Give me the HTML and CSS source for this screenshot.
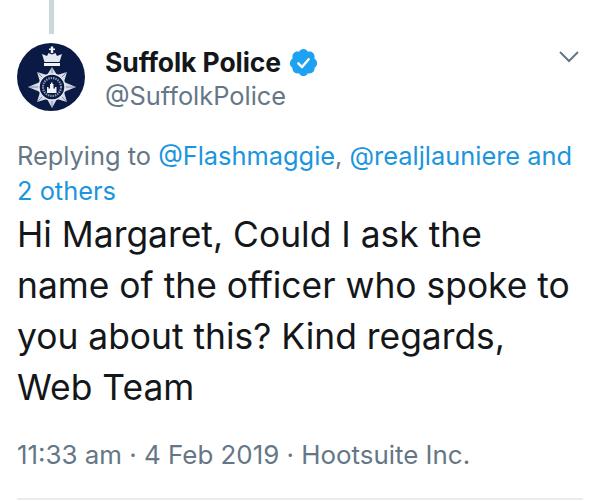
FILE: index.html
```html
<!DOCTYPE html>
<html lang="en">
<head>
<meta charset="utf-8">
<title>Suffolk Police tweet</title>
<link rel="stylesheet" href="styles.css">
</head>
<body>
<main class="tweet">
  <div class="thread-line"></div>
  <header class="head">
    <svg class="avatar" viewBox="0 0 68 68" aria-label="Suffolk Police crest">
      <circle cx="34" cy="34" r="34" fill="#0a1a45"/>
      <path d="M59 44 47 49 50 59 40 56 35 65 30 56 20 59 23 49 11 44 23 39 20 29 30 32 35 24 40 32 50 29 47 39Z" fill="#d5dbe8"/>
      <path d="M11 44H59M35 24V65M20 29 50 59M50 29 20 59" stroke="#5a6a8e" stroke-width=".7"/>
      <circle cx="35" cy="44" r="13" fill="#0a1a45" stroke="#e6eaf2" stroke-width="1.4"/>
      <circle cx="35" cy="44" r="9" fill="none" stroke="#8e9ab6" stroke-width="2.2" stroke-dasharray="1.4 1"/>
      <path d="M30 50v-6h1.5v1.5h1.5v-4.500h1v-1.500h1.500v1.500h1v4.500h1.500v-1.500h1.500v6z" fill="#eef1f6"/>
      <path d="M27 23h16v-3H27z" fill="#f0f2f7"/>
      <path d="M27.500 19 25 11 30 13 31.500 10 35 11.500 38.500 10 40 13 45 11 42.500 19z" fill="#e3e7f0"/>
      <path d="M33.800 10V7H32V5.500H33.800V3.500H36.200V5.500H38V7H36.200V10z" fill="#f2f4f8"/>
    </svg>
    <div class="names">
      <div class="name-row">
        <span class="name">Suffolk Police</span>
        <svg class="badge" viewBox="0 0 24 24" aria-label="Verified">
          <path d="M22.500 12.500c0-1.580-.875-2.950-2.148-3.600.154-.435.238-.905.238-1.400 0-2.210-1.710-3.998-3.818-3.998-.470 0-.920.084-1.336.250C14.818 2.415 13.510 1.500 12 1.500s-2.816.917-3.437 2.250c-.415-.165-.866-.250-1.336-.250-2.110 0-3.818 1.790-3.818 4 0 .494.083.964.237 1.400-1.272.650-2.147 2.018-2.147 3.600 0 1.495.782 2.798 1.942 3.486-.020.170-.032.340-.032.514 0 2.210 1.708 4 3.818 4 .470 0 .920-.086 1.335-.250.620 1.334 1.926 2.250 3.437 2.250 1.512 0 2.818-.916 3.437-2.250.415.163.865.248 1.336.248 2.110 0 3.818-1.790 3.818-4 0-.174-.012-.344-.033-.513 1.158-.687 1.943-1.990 1.943-3.484z" fill="#1da1f2"/>
          <path d="M8 12.600l2.900 2.900 5.100-6" fill="none" stroke="#fff" stroke-width="1.900" stroke-linecap="round" stroke-linejoin="round"/>
        </svg>
      </div>
      <div class="handle">@SuffolkPolice</div>
    </div>
    <svg class="chevron" viewBox="0 0 20 12" aria-label="More">
      <path d="M1 1 10 10 19 1" fill="none" stroke="#657786" stroke-width="2"/>
    </svg>
  </header>
  <p class="reply">Replying to <span class="link">@Flashmaggie</span>, <span class="link">@realjlauniere</span> <span class="link">and 2 others</span></p>
  <p class="body">Hi Margaret, Could I ask the name of the officer who spoke to you about this? Kind regards, Web Team</p>
  <p class="meta">11:33 am · 4 Feb 2019 · Hootsuite Inc.</p>
  <div class="rule"></div>
</main>
</body>
</html>
```
FILE: styles.css
```css
html, body {
  margin: 0;
  padding: 0;
  background: #fff;
}
body {
  width: 600px;
  height: 501px;
  overflow: hidden;
  font-family: "Inter", "Liberation Sans", sans-serif;
}
.tweet {
  height: 501px;
  box-sizing: border-box;
  padding: 0 17px 1px;
  display: flex;
  flex-direction: column;
}
.rule {
  height: 2px;
  background: #e6ecf0;
  margin-top: auto;
}
.thread-line {
  width: 5px;
  height: 34px;
  margin-left: 32px;
  background: #ccd6dd;
}
.head {
  display: flex;
  align-items: flex-start;
  margin-top: 9px;
}
.avatar {
  width: 68px;
  height: 68px;
  flex: none;
}
.names {
  margin-left: 20px;
  flex: 1;
}
.name-row {
  display: flex;
  align-items: center;
  height: 32px;
  margin-top: 3px;
}
.name {
  font-size: 26.5px;
  font-weight: 700;
  color: #14171a;
  letter-spacing: -0.1px;
}
.badge {
  width: 31px;
  height: 31px;
  margin-left: 7px;
}
.handle {
  font-size: 25.400px;
  line-height: 30px;
  margin-top: 3px;
  color: #657786;
}
.chevron {
  width: 20px;
  height: 12px;
  margin-top: 8px;
  margin-right: 4px;
}
.reply {
  margin: 27px 0 0;
  font-size: 25.400px;
  line-height: 35px;
  color: #657786;
}
.link {
  color: #1b95e0;
}
.body {
  margin: 1px 8px 0 0;
  font-size: 35.400px;
  line-height: 51px;
  color: #14171a;
}
.meta {
  margin: 27px 0 0;
  font-size: 25.900px;
  line-height: 30px;
  color: #657786;
}
```
